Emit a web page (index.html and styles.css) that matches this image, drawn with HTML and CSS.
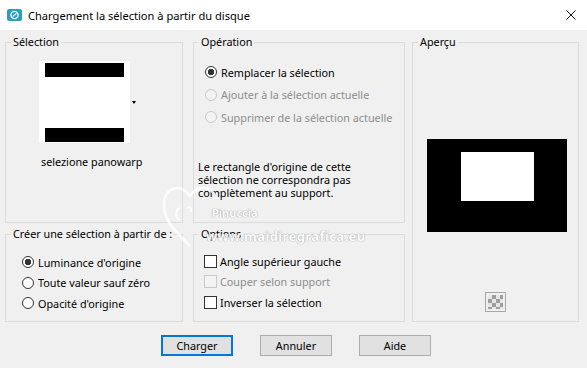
FILE: index.html
```html
<!DOCTYPE html>
<html lang="fr">
<head>
<meta charset="UTF-8" />
<title>Chargement la sélection à partir du disque</title>
<link rel="stylesheet" href="styles.css">
</head>
<body>

<div class="titlebar">
  <svg class="app-icon" viewBox="0 0 15 12">
    <rect x="0" y="0" width="15" height="12" rx="2" fill="#2a9fb5"/>
    <circle cx="7.5" cy="6" r="3.6" fill="none" stroke="#e8f7fa" stroke-width="1.4"/>
    <path d="M5.6 7.6 L9.6 4.2" stroke="#e8f7fa" stroke-width="1.2"/>
  </svg>
  <span class="title">Chargement la sélection à partir du disque</span>
  <svg class="close" viewBox="0 0 10 10">
    <path d="M0.5 0.5 L9.5 9.5 M9.5 0.5 L0.5 9.5" stroke="#111" stroke-width="1"/>
  </svg>
</div>

<div class="dialog">
  <div class="groups">

    <fieldset class="group">
      <legend>Sélection</legend>
      <div class="thumb-row">
        <div class="thumb">
          <div class="thumb-bar top"></div>
          <div class="thumb-bar bottom"></div>
        </div>
        <span class="drop-arrow"></span>
      </div>
      <div class="sel-name">selezione panowarp</div>
    </fieldset>

    <fieldset class="group">
      <legend>Opération</legend>
      <div class="op-list">
        <label class="choice"><input type="radio" name="op" checked> Remplacer la sélection</label>
        <label class="choice disabled"><input type="radio" name="op" disabled> Ajouter à la sélection actuelle</label>
        <label class="choice disabled"><input type="radio" name="op" disabled> Supprimer de la sélection actuelle</label>
      </div>
      <p class="op-note">Le rectangle d'origine de cette<br>sélection ne correspondra pas<br>complètement au support.</p>
    </fieldset>

    <fieldset class="group preview-group">
      <legend>Aperçu</legend>
      <div class="preview">
        <div class="preview-shape"></div>
      </div>
      <div class="checker"></div>
    </fieldset>

    <fieldset class="group">
      <legend>Créer une sélection à partir de :</legend>
      <div class="src-list">
        <label class="choice"><input type="radio" name="src" checked> Luminance d'origine</label>
        <label class="choice"><input type="radio" name="src"> Toute valeur sauf zéro</label>
        <label class="choice"><input type="radio" name="src"> Opacité d'origine</label>
      </div>
    </fieldset>

    <fieldset class="group">
      <legend>Options</legend>
      <div class="opt-list">
        <label class="choice check"><input type="checkbox"> Angle supérieur gauche</label>
        <label class="choice check disabled"><input type="checkbox" disabled> Couper selon support</label>
        <label class="choice check"><input type="checkbox"> Inverser la sélection</label>
      </div>
    </fieldset>

  </div>

  <div class="buttons">
    <button class="default">Charger</button>
    <button>Annuler</button>
    <button>Aide</button>
  </div>
</div>

<div class="watermark">
  <svg class="wm-heart" viewBox="0 0 60 70">
    <path d="M30 68 C14 52 3 42 4 24 C5 10 20 4 30 18 C38 6 52 8 56 20" fill="none" stroke="#fff" stroke-width="2.5" opacity="0.85"/>
    <path d="M20 30 C15 32 15 40 20 42 M27 30 C30 28 33 31 30 34" fill="none" stroke="#fff" stroke-width="2" opacity="0.85"/>
  </svg>
  <span class="wm-name">Pinuccia</span>
  <span class="wm-site">www.maidiregrafica.eu</span>
</div>

</body>
</html>
```

FILE: styles.css
```css
body {
  margin: 0;
  width: 587px;
  height: 368px;
  overflow: hidden;
  position: relative;
  background: #f0f0f0;
  font-family: "Noto Sans", "Open Sans", sans-serif;
  font-size: 10.8px;
  color: #000;
}
.titlebar {
  height: 30px;
  background: #fff;
  display: flex;
  align-items: center;
  padding-left: 7px;
}
.app-icon {
  width: 15px;
  height: 12px;
  margin-right: 6px;
}
.title {
  font-size: 11.1px;
}
.close {
  width: 10px;
  height: 10px;
  margin-left: auto;
  margin-right: 11px;
}
.dialog {
  padding: 5px 0 0 5px;
}
.groups {
  display: grid;
  grid-template-columns: 178px 212px 167px;
  grid-template-rows: 188px 95px;
  column-gap: 10px;
  row-gap: 4px;
}
.group {
  margin: 0;
  padding: 0;
  min-width: 0;
  border: 1px solid #dcdcdc;
}
.group legend {
  margin-left: 5px;
  padding: 0 2px;
  line-height: 14px;
  white-space: nowrap;
}
.preview-group {
  grid-column: 3;
  grid-row: 1 / span 2;
  margin-left: -3px;
  width: 167px;
  box-sizing: border-box;
}

/* Sélection */
.thumb-row {
  display: flex;
  align-items: center;
  margin: 12px 0 0 33px;
}
.thumb {
  width: 91px;
  height: 82px;
  background: #fff;
  display: flex;
  flex-direction: column;
  justify-content: space-between;
}
.thumb-bar {
  height: 14px;
  background: #000;
}
.thumb-bar.top {
  margin: 2px 6px 0;
}
.thumb-bar.bottom {
  margin: 0 6px 1px;
}
.drop-arrow {
  margin-left: 2px;
  border-left: 2.5px solid transparent;
  border-right: 2.5px solid transparent;
  border-top: 3px solid #000;
}
.sel-name {
  margin: 11px 0 0 35px;
  line-height: 16px;
}

/* radios & checkboxes */
.choice {
  display: flex;
  align-items: center;
  height: 16px;
  gap: 4px;
}
.choice input {
  appearance: none;
  margin: 0;
  width: 12px;
  height: 12px;
  border: 1px solid #333;
  border-radius: 50%;
  background: #fff;
  box-sizing: border-box;
}
.choice input:checked {
  background: radial-gradient(circle, #333 3px, #fff 3.5px);
}
.choice.check {
  gap: 3px;
}
.choice.check input {
  width: 13px;
  height: 13px;
  border-radius: 0;
}
.choice.disabled {
  color: #8d8d8d;
}
.choice.disabled input {
  border-color: #c8c8c8;
  background: #f3f3f3;
}
.op-list {
  display: flex;
  flex-direction: column;
  gap: 6.5px;
  margin: 15px 0 0 11px;
}
.op-note {
  margin: 35px 0 0 4px;
  line-height: 13px;
}
.src-list {
  display: flex;
  flex-direction: column;
  gap: 4.5px;
  margin: 13px 0 0 16px;
}
.opt-list {
  display: flex;
  flex-direction: column;
  gap: 4.5px;
  margin: 12px 0 0 10px;
}

/* Aperçu */
.preview {
  width: 140px;
  height: 93px;
  margin: 90px 0 0 14px;
  background: #000;
  overflow: hidden;
}
.preview-shape {
  width: 73px;
  height: 49px;
  margin: 13px 0 0 34px;
  background: #fff;
}
.checker {
  width: 21px;
  height: 20px;
  margin: 60px 0 0 72px;
  box-sizing: border-box;
  border: 1px solid #a8a8a8;
  padding: 2px;
  background: repeating-conic-gradient(#9e9e9e 0 25%, #e6e6e6 0 50%) 0 0 / 8px 8px;
  background-origin: content-box;
  background-clip: content-box;
}

/* buttons */
.buttons {
  display: flex;
  justify-content: center;
  gap: 27px;
  margin-top: 13px;
}
.buttons button {
  width: 72px;
  height: 21px;
  padding: 0;
  font-family: inherit;
  font-size: 10.8px;
  color: #000;
  background: #e1e1e1;
  border: 1px solid #adadad;
}
.buttons button.default {
  border: 2px solid #0078d7;
}

/* photo watermark */
.watermark {
  position: absolute;
  left: 160px;
  top: 178px;
  width: 215px;
  height: 70px;
  pointer-events: none;
}
.wm-heart {
  position: absolute;
  left: 0;
  top: 0;
  width: 60px;
  height: 70px;
}
.wm-name, .wm-site {
  position: absolute;
  color: #fff;
  font-weight: bold;
  line-height: 14px;
  text-shadow: 0 0 1px #9a9a9a, 0 0 1px #9a9a9a;
  opacity: 0.9;
}
.wm-name {
  left: 52px;
  top: 28px;
  font-size: 11px;
}
.wm-site {
  left: 46px;
  top: 51px;
  font-size: 13px;
  letter-spacing: 0.4px;
}
```
